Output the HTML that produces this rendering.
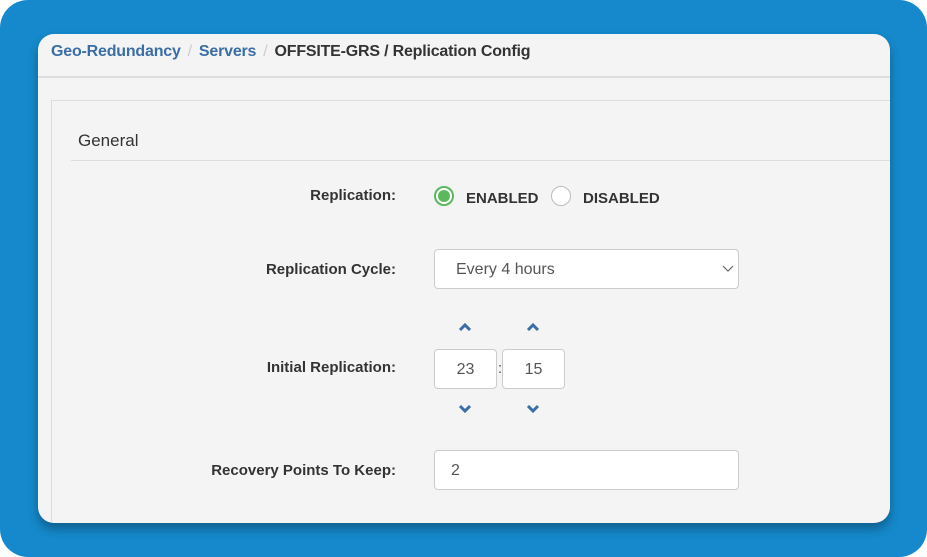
<!DOCTYPE html>
<html><head><style>
*{box-sizing:border-box;margin:0;padding:0}
body{width:927px;height:557px;background:#fff;font-family:"Liberation Sans",sans-serif;overflow:hidden;position:relative}
.bg{position:absolute;left:0;top:0;width:927px;height:557px;background:#1589cb;border-radius:28px}
.card{position:absolute;left:38px;top:34px;width:852px;height:489px;background:#f4f4f4;border-radius:16px;overflow:hidden;box-shadow:0 6px 10px rgba(0,0,0,.3)}
.hdr{height:44px;border-bottom:2px solid #ddd;padding:9px 0 0 13px;font-size:16px;font-weight:bold;letter-spacing:-0.2px}
.hdr a{color:#3a6ea5}.hdr .s{color:#ccc;font-weight:normal;margin:0 7px}.hdr .c{color:#333}
.panel{position:absolute;left:13px;top:66px;width:900px;height:460px;border:1px solid #ddd;border-right:none}
.gen{position:absolute;left:26px;top:30px;font-size:17px;color:#333}
.line{position:absolute;left:19px;top:59px;width:900px;border-top:1px solid #ddd}
.lbl{position:absolute;right:0;width:345px;text-align:right;font-weight:bold;font-size:15px;color:#333;left:0}
.ctl{position:absolute;background:#fff;border:1px solid #ccc;border-radius:4px;font-size:16px;color:#555}
.radio{position:absolute;width:20px;height:20px;border-radius:50%;border:1px solid #bbb;background:#fff}
.rt{position:absolute;font-weight:bold;font-size:15px;color:#333}
svg{position:absolute}
</style></head><body>
<div class="bg"></div>
<div class="card">
<div class="hdr"><a>Geo-Redundancy</a><span class="s">/</span><a>Servers</a><span class="s">/</span><span class="c">OFFSITE-GRS / Replication Config</span></div>
<div class="panel">
<div class="gen">General</div>
<div class="line"></div>
</div>
<div class="lbl" style="top:153px;width:358px">Replication:</div>
<div class="radio" style="left:396px;top:152px;border:2px solid #5cb85c"><div style="position:absolute;left:2px;top:2px;width:12px;height:12px;border-radius:50%;background:#5cb85c"></div></div>
<div class="rt" style="left:428px;top:156px">ENABLED</div>
<div class="radio" style="left:513px;top:152px"></div>
<div class="rt" style="left:545px;top:156px">DISABLED</div>
<div class="lbl" style="top:227px;width:358px">Replication Cycle:</div>
<div class="ctl" style="left:396px;top:215px;width:305px;height:40px;padding:11px 0 0 21px">Every 4 hours</div>
<svg style="left:684px;top:231px" width="12" height="8"><path d="M1 1L6 6L11 1" stroke="#666" fill="none" stroke-width="1.2"/></svg>
<svg style="left:420px;top:289px" width="14" height="9"><path d="M2 7L7 2L12 7" stroke="#3a6ea5" fill="none" stroke-width="3"/></svg>
<svg style="left:488px;top:289px" width="14" height="9"><path d="M2 7L7 2L12 7" stroke="#3a6ea5" fill="none" stroke-width="3"/></svg>
<div class="lbl" style="top:325px;width:358px">Initial Replication:</div>
<div class="ctl" style="left:396px;top:315px;width:63px;height:40px;padding:11px 0 0;text-align:center">23</div>
<div style="position:absolute;left:460px;top:326px;font-size:15px;color:#555">:</div>
<div class="ctl" style="left:464px;top:315px;width:63px;height:40px;padding:11px 0 0;text-align:center">15</div>
<svg style="left:420px;top:370px" width="14" height="9"><path d="M2 2L7 7L12 2" stroke="#3a6ea5" fill="none" stroke-width="3"/></svg>
<svg style="left:488px;top:370px" width="14" height="9"><path d="M2 2L7 7L12 2" stroke="#3a6ea5" fill="none" stroke-width="3"/></svg>
<div class="lbl" style="top:428px;width:358px">Recovery Points To Keep:</div>
<div class="ctl" style="left:396px;top:416px;width:305px;height:40px;padding:11px 0 0 16px">2</div>
</div>
</body></html>
